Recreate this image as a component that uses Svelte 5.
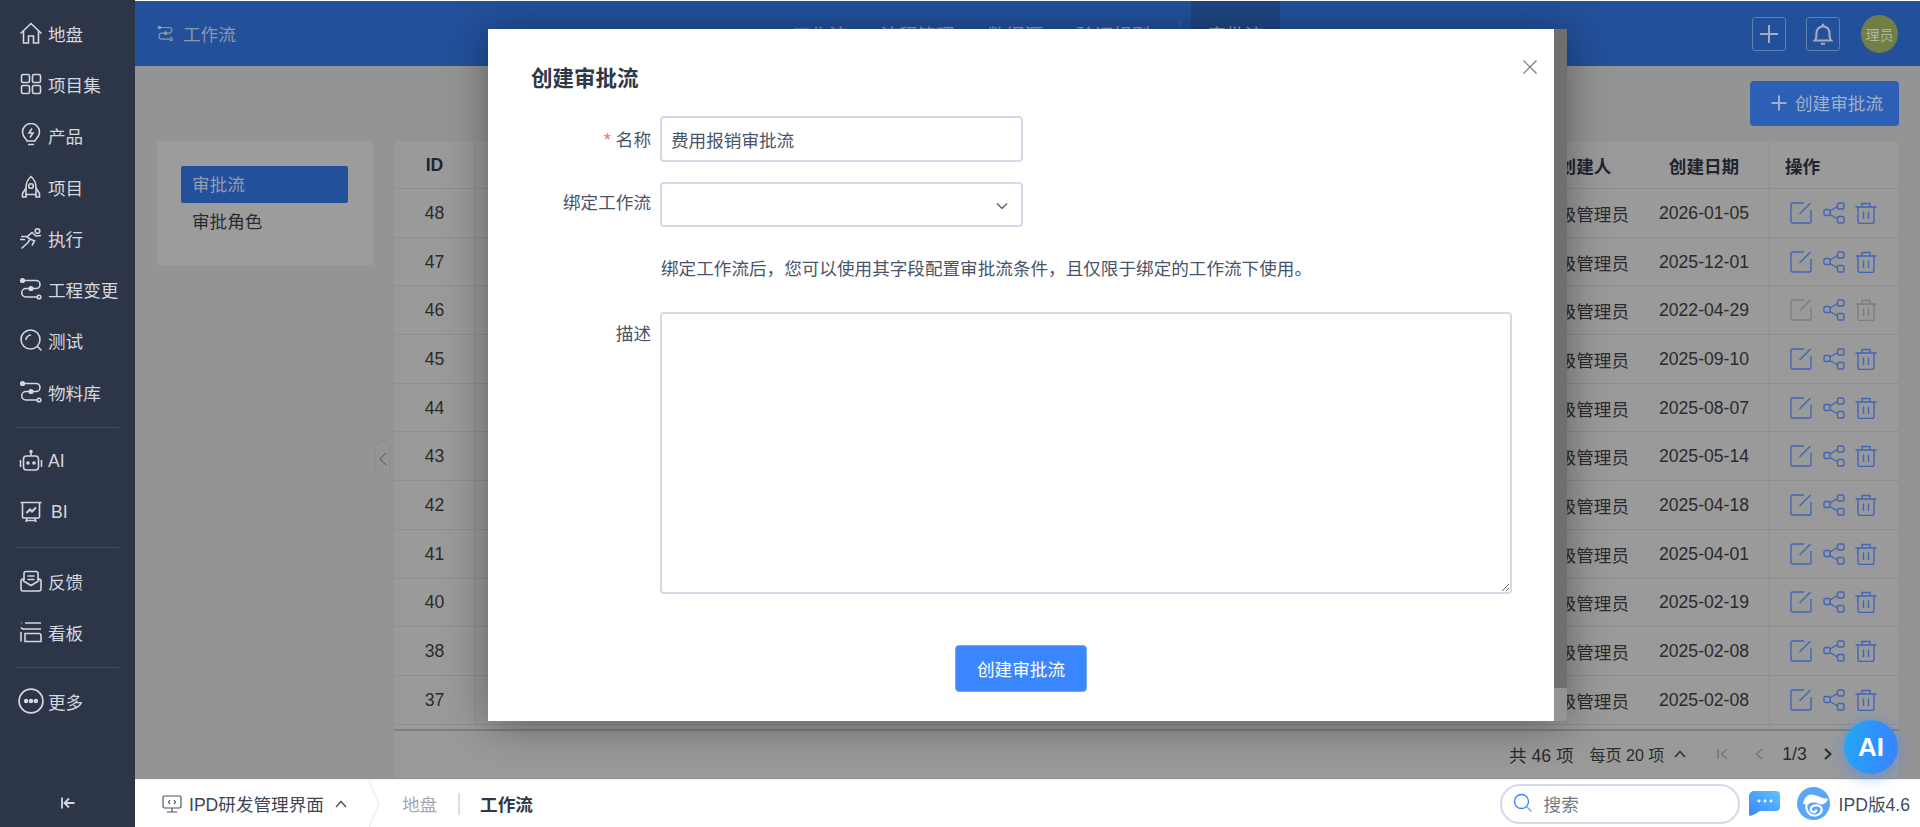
<script>
  const ic = {
    home: '<path d="M1.500 12.500 12 2.500l10.500 10"/><path d="M4.500 10v12h5v-7h5v7h5V10"/>',
    grid: '<rect x="2.500" y="2.500" width="8" height="8" rx="1.500"/><rect x="13.500" y="2.500" width="8" height="8" rx="1.500"/><rect x="2.500" y="13.500" width="8" height="8" rx="1.500"/><rect x="13.500" y="13.500" width="8" height="8" rx="1.500"/>',
    bulb: '<path d="M8 18c0-2-4.500-3.500-4.500-9a8.500 8.500 0 0 1 17 0c0 5.500-4.500 7-4.500 9z"/><path d="m13 5.500-3 4.500h4l-3 4.500M9 21.500h6"/>',
    rocket: '<path d="M12 1.500c3.500 3 5 7 5 11v7H7v-7c0-4 1.500-8 5-11z"/><circle cx="12" cy="11" r="2.300"/><path d="M7 13l-3.500 5.500v3.500H7v-2.500M17 13l3.500 5.500v3.500H17v-2.500"/>',
    run: '<circle cx="18.500" cy="5" r="2.300"/><path d="M2.500 22.500l6.500-6 2-3.500-3-2 5-4.500 4 3.500 5-.5M11 13l4.500 2-2.500 4.500M2 10.500h6M1 13.500h5"/>',
    flow: '<path d="M4.500 3.500H17a4 4 0 0 1 0 8H7a4.200 4.200 0 0 0 0 8.500h11"/><circle cx="3.500" cy="3.500" r="1.800" fill="currentColor"/><circle cx="12" cy="11.500" r="1.800" fill="currentColor"/><circle cx="20" cy="20" r="1.800"/>',
    test: '<circle cx="11.500" cy="11.500" r="9.500"/><path d="M7 12a5 5 0 0 1 5-5M18 18l4.500 4.500"/>',
    robot: '<rect x="4.500" y="7" width="15" height="14" rx="3"/><path d="M12 7V3M1.500 11v7M22.500 11v7"/><circle cx="12" cy="2.500" r="1" fill="currentColor"/><circle cx="9" cy="14" r="1" fill="currentColor"/><circle cx="15" cy="14" r="1" fill="currentColor"/>',
    board: '<path d="M1.500 2.500h21M3.500 2.500V17a1 1 0 0 0 1 1h15a1 1 0 0 0 1-1V2.500M8 18l-1 4M16 18l1 4M7 20.500h10"/><path d="m7.500 13 3.500-3.500 2 2 4-4" stroke-width="2"/>',
    mail: '<path d="M5 11V4.500a2 2 0 0 1 2-2h10a2 2 0 0 1 2 2V11"/><path d="M8.500 7h7M8.500 10.500h7"/><path d="M2 11.500a2 2 0 0 1 1.500-1.500h1v2l7.500 4.500 7.500-4.500v-2h1a2 2 0 0 1 1.500 1.500V20a2 2 0 0 1-2 2H4a2 2 0 0 1-2-2z"/>',
    kanban: '<path d="M6 3h16M2 3h.5M22 9H6a4 4 0 0 1-4-1.500M6 13.500h14a2 2 0 0 1 2 2v6H6z"/><path d="M2 12v9.500"/>',
    more: '<circle cx="12" cy="12" r="11"/><circle cx="7.500" cy="12" r="1.300" fill="currentColor"/><circle cx="12" cy="12" r="1.300" fill="currentColor"/><circle cx="16.500" cy="12" r="1.300" fill="currentColor"/>'
  };
  const groups = [
    [['home','地盘'],['grid','项目集'],['bulb','产品'],['rocket','项目'],['run','执行'],['flow','工程变更'],['test','测试'],['flow','物料库']],
    [['robot','AI'],['board','BI']],
    [['mail','反馈'],['kanban','看板']],
    [['more','更多']]
  ];
  const rows = [
    [48,'2026-01-05'],[47,'2025-12-01'],[46,'2022-04-29',true],[45,'2025-09-10'],[44,'2025-08-07'],
    [43,'2025-05-14'],[42,'2025-04-18'],[41,'2025-04-01'],[40,'2025-02-19'],[38,'2025-02-08'],[37,'2025-02-08']
  ];
  const tabs = ['工作流','流程管理','数据源','验证规则'];
</script>

<div class="app">
  <aside class="side">
    {#each groups as g, i}
      {#if i > 0}<div class="sep"></div>{/if}
      {#each g as it}
        <div class="nav" class:wide={it[1]==='BI'}>
          <svg viewBox="0 0 24 24" class="nic" class:big={it[0]==='more'}>{@html ic[it[0]]}</svg>
          <span>{it[1]}</span>
        </div>
      {/each}
    {/each}
    <div class="collapse">
      <svg viewBox="0 0 16 16" width="16" height="16"><path d="M2 2.500v11M14.500 8H5M9 3.500 4.500 8 9 12.500"/></svg>
    </div>
  </aside>

  <div class="right">
    <div class="main">
      <header class="head">
        <div class="title">
          <svg viewBox="0 0 24 24" class="tic">{@html ic.flow}</svg>
          <span>工作流</span>
        </div>
        <nav class="tabs">
          {#each tabs as t}<span>{t}</span>{/each}
          <i></i>
          <b>审批流</b>
        </nav>
        <div class="tools">
          <div class="tool"><svg viewBox="0 0 24 24" width="24" height="24"><path d="M12 3v18M3 12h18"/></svg></div>
          <div class="tool"><svg viewBox="0 0 24 24" width="26" height="26"><path d="M4.500 18c1.500-1.500 1.500-3.500 1.500-7a6 6 0 0 1 12 0c0 3.500 0 5.500 1.500 7zM12 2.500V5M10 21h4"/></svg></div>
          <div class="avatar">理员</div>
        </div>
      </header>

      <div class="content">
        <div class="bar">
          <button class="add">
            <svg viewBox="0 0 18 18" width="18" height="18"><path d="M9 1.500v15M1.500 9h15"/></svg>
            <span>创建审批流</span>
          </button>
        </div>
        <div class="cols">
          <div class="panel">
            <div class="pi on">审批流</div>
            <div class="pi">审批角色</div>
          </div>
          <div class="handle"><svg viewBox="0 0 10 16" width="10" height="16"><path d="M8 2 2 8l6 6"/></svg></div>
          <section class="table">
            <div class="row th">
              <div class="c id">ID</div><div class="c fill"></div><div class="c who">创建人</div><div class="c date">创建日期</div><div class="c ops">操作</div>
            </div>
            {#each rows as r}
              <div class="row">
                <div class="c id">{r[0]}</div>
                <div class="c fill"></div>
                <div class="c who">超级管理员</div>
                <div class="c date">{r[1]}</div>
                <div class="c ops acts">
                  <svg viewBox="0 0 22 22" class="act" class:off={r[2]}><path d="M14 1H2.500A1.500 1.500 0 0 0 1 2.500v17A1.500 1.500 0 0 0 2.500 21h17a1.500 1.500 0 0 0 1.500-1.500V8M20.500 1 9.500 12"/></svg>
                  <svg viewBox="0 0 22 22" class="act"><rect x="1" y="7.500" width="6" height="6" rx="1.500"/><rect x="14.500" y="1" width="6.500" height="6" rx="1.500"/><rect x="14.500" y="14.500" width="6.500" height="6.500" rx="1.500"/><path d="m7 9 7.500-4.500M7 12.500l7.500 4.500"/></svg>
                  <svg viewBox="0 0 22 22" class="act" class:off={r[2]}><path d="M.5 5h21M7 5V1.500h8V5M3 5v14.500A2 2 0 0 0 5 21.500h12a2 2 0 0 0 2-2V5M8.500 9.500V17M13.500 9.500V17"/></svg>
                </div>
              </div>
            {/each}
            <div class="pager">
              <span>共 46 项</span>
              <span class="per">每页 20 项</span>
              <svg viewBox="0 0 12 8" class="pg up"><path d="M1 7l5-5.500L11 7"/></svg>
              <svg viewBox="0 0 11 12" class="pg first dim"><path d="M1 1v10M10 1 4.500 6l5.500 5"/></svg>
              <svg viewBox="0 0 8 12" class="pg prev dim"><path d="M7 1 1.500 6 7 11"/></svg>
              <span class="page">1/3</span>
              <svg viewBox="0 0 8 12" class="pg next"><path d="M1 1l5.500 5L1 11"/></svg>
            </div>
          </section>
        </div>
      </div>

      <div class="dialog">
        <div class="modal">
          <svg class="close" viewBox="0 0 14 14" width="14" height="14"><path d="M.5.5l13 13M13.500.5l-13 13"/></svg>
          <h2>创建审批流</h2>
          <div class="f f1">
            <label for="n"><em>*</em> 名称</label>
            <input id="n" value="费用报销审批流" />
          </div>
          <div class="f f2">
            <label for="s">绑定工作流</label>
            <div class="sel" id="s"><svg viewBox="0 0 12 8" width="12" height="8"><path d="M1 1.500 6 6.500l5-5"/></svg></div>
          </div>
          <p class="hint">绑定工作流后，您可以使用其字段配置审批流条件，且仅限于绑定的工作流下使用。</p>
          <div class="f f3">
            <label for="d">描述</label>
            <textarea id="d"></textarea>
          </div>
          <div class="foot"><button class="ok">创建审批流</button></div>
        </div>
        <div class="track"><div class="thumb"></div></div>
      </div>
    </div>

    <footer class="bottom">
      <svg viewBox="0 0 20 20" width="20" height="20" class="mon"><rect x="1" y="2" width="18" height="12" rx="1.500"/><path d="M10 14v4M5 18h10M8 6 6.500 8 8 10M12 6l1.500 2L12 10"/></svg>
      <span class="sys">IPD研发管理界面</span>
      <svg viewBox="0 0 12 8" width="12" height="8" class="caret"><path d="M1 7l5-5.500L11 7"/></svg>
      <svg viewBox="0 0 12 48" width="12" height="48" class="arrow"><path d="M1 0l10 24L1 48"/></svg>
      <span class="crumb">地盘</span>
      <i class="vr"></i>
      <b class="cur">工作流</b>
      <div class="search">
        <svg viewBox="0 0 20 20" width="20" height="20"><circle cx="8.500" cy="8.500" r="7"/><path d="m13.500 13.500 5 5" stroke="#8fa6c8"/></svg>
        <span>搜索</span>
      </div>
      <svg class="chat" viewBox="0 0 31 25" width="31" height="25">
        <defs><linearGradient id="cg" x1="0" y1="1" x2="1" y2="0"><stop offset="0" stop-color="#3a86ff"/><stop offset="1" stop-color="#5cc4ff"/></linearGradient></defs>
        <path d="M5 0h22a4 4 0 0 1 4 4v12a4 4 0 0 1-4 4H11C8 22 4 24 1.500 25 .5 25 0 24 0 23V5a5 5 0 0 1 5-5z" fill="url(#cg)"/>
        <circle cx="10" cy="10" r="1.400" fill="#fff"/><circle cx="16" cy="10" r="1.400" fill="#fff"/><circle cx="22" cy="10" r="1.400" fill="#fff"/>
      </svg>
      <svg class="logo" viewBox="0 0 33 33" width="33" height="33">
        <circle cx="16.500" cy="16.500" r="16.500" fill="#5aa5f6"/>
        <path d="M6 17C7 11 10 8 14 7.500 19 7 24 12 31 11.500 30 16 26 18.500 22 17 18 15 13 15 11.500 17.500z" fill="#fff"/>
        <path d="M9.500 17C8.500 22 11 28 17 28.500 22 29 25.500 25 24.500 21.500 23.500 18.500 19 17.500 16 19 13 20.500 13 24 16 25 18 25.500 19.500 24 19 22.500" stroke="#fff" stroke-width="2.200" fill="none"/>
      </svg>
      <span class="ver">IPD版4.6</span>
    </footer>

    <div class="ai">AI</div>
  </div>
</div>

<style>
  :global(body) { margin: 0; background: #fff; overflow: hidden; }
  * { box-sizing: border-box; }
  svg { fill: none; stroke: currentColor; flex: none; }
  .app {
    display: flex; height: 827px; width: 1920px; padding-top: 1px;
    font-family: "Liberation Sans", "Noto Sans CJK SC", sans-serif; font-size: 17.6px;
  }
  .side {
    width: 135px; flex: none; margin-top: -1px; background: #2d3649; color: #d4d7dd;
    display: flex; flex-direction: column; padding-top: 7px;
  }
  .nav { height: 51.3px; display: flex; align-items: center; padding-left: 19px; gap: 5px; flex: none; }
  .nav span { padding-top: 1px; }
  .nav.wide { gap: 8px; }
  .nic { width: 24px; height: 24px; stroke-width: 1.6; }
  .nic.big { width: 26px; height: 26px; margin-left: -1px; margin-right: -1px; }
  .sep { height: 1px; background: #475063; margin: 9.500px 16px 7.200px; flex: none; }
  .collapse { margin-top: auto; height: 48px; display: flex; align-items: center; justify-content: center; }
  .collapse svg { stroke-width: 1.8; }

  .right { flex: 1; min-width: 0; display: flex; flex-direction: column; position: relative; }
  .main { height: 778px; background: #949494; position: relative; flex: none; display: flex; flex-direction: column; }

  .head { height: 65px; background: #22509a; display: flex; align-items: center; color: #9299a8; flex: none; }
  .title { display: flex; align-items: center; gap: 9px; width: 657px; padding-left: 22px; color: #8f98aa; }
  .tic { width: 17px; height: 17px; stroke-width: 1.6; }
  .tabs { display: flex; align-items: center; height: 100%; gap: 33px; color: #98a0ae; font-size: 18.5px; }
  .tabs i { width: 2px; height: 28px; background: #2f5ca3; margin-left: -4px; margin-right: -23px; }
  .tabs b { font-weight: 400; height: 100%; width: 89px; display: flex; align-items: center; justify-content: center; background: #1f4683; }
  .tools { margin-left: auto; display: flex; align-items: center; gap: 20px; padding-right: 22px; }
  .tool { width: 34px; height: 34px; border: 1px solid #5d7fb3; border-radius: 3px; display: flex; align-items: center; justify-content: center; color: #a3abb8; }
  .tool svg { stroke-width: 2; }
  .avatar { width: 37px; height: 38px; border-radius: 50%; background: #6f7f45; color: #b0b5a5; font-size: 14px; display: flex; align-items: center; justify-content: center; margin-left: 1px; }

  .content { flex: 1; min-height: 0; display: flex; flex-direction: column; padding: 15px 21px 0 22px; }
  .bar { display: flex; justify-content: flex-end; height: 60px; flex: none; }
  .add { width: 149px; height: 45px; background: #2b60b6; border: 0; border-radius: 4px; color: #9fb0cc; font: inherit; display: flex; align-items: center; gap: 7px; padding: 0 0 2px 20px; white-space: nowrap; }
  .add svg { stroke-width: 2; }
  .cols { flex: 1; min-height: 0; display: flex; gap: 21px; position: relative; padding-bottom: 1px; }
  .panel { width: 216px; height: 124px; flex: none; background: #9c9c9c; padding: 25px 25px 0 24px; color: #2c2c2c; }
  .pi { height: 37px; padding: 0 0 3px 11px; display: flex; align-items: center; border-radius: 2px; }
  .pi.on { background: #22509a; color: #929db4; }
  .pi + .pi { height: 36px; padding-bottom: 2px; }
  .handle { position: absolute; left: 218px; top: 299px; width: 15px; height: 38px; border: 1px solid #8d8d8d; border-radius: 8px; display: flex; align-items: center; justify-content: center; color: #555; }
  .handle svg { stroke-width: 1; }

  .table { flex: 1; min-width: 0; background: #9a9a9a; border-radius: 3px; display: flex; flex-direction: column; color: #2b2b2b; box-shadow: 0 0 1px #8c8c8c; }
  .row { display: grid; grid-template-columns: 82px 1fr 112px 130px 130px; height: 48.7px; flex: none; border-bottom: 1px solid #8e8e8e; }
  .th { height: 48px; font-weight: 700; color: #1f2530; }
  .c { display: flex; align-items: center; justify-content: center; min-width: 0; white-space: nowrap; padding-top: 1px; }
  .id { border-right: 1px solid #8e8e8e; }
  .who { padding-left: 4px; }
  .ops { border-left: 1px solid #8e8e8e; justify-content: flex-start; padding-left: 15px; }
  .acts { padding-left: 20px; gap: 10.600px; padding-top: 0; }
  .act { width: 22px; height: 22px; color: #3f66b8; stroke-width: 1.4; }
  .act.off { color: #7e7e7e; }
  .pager { margin-top: 4px; border-top: 2px solid #7f7f7f; flex: 1; display: flex; align-items: center; padding-left: 1115px; color: #2b2b2b; }
  .per { font-size: 16px; margin-left: 16px; }
  .pg { flex: none; stroke-width: 1.5; }
  .up { width: 12px; height: 8px; margin-left: 10px; }
  .first { width: 11px; height: 12px; margin-left: 31px; }
  .prev { width: 8px; height: 12px; margin-left: 27px; }
  .page { margin-left: 19px; }
  .next { width: 8px; height: 12px; margin-left: 17px; stroke-width: 2; }
  .dim { color: #777; }

  .dialog { position: absolute; left: 353px; top: 28px; width: 1079px; height: 692px; display: flex; box-shadow: 0 4px 44px rgba(0,0,0,.38); border-radius: 0 0 4px 0; }
  .modal { width: 1066px; background: #fff; position: relative; flex: none; color: #4a5468; }
  .track { width: 13px; background: #949494; border-radius: 0 0 4px 0; overflow: hidden; }
  .thumb { height: 659px; background: #6f6f6f; }
  .close { position: absolute; left: 1035px; top: 31px; color: #6f7685; stroke-width: 1.2; }
  h2 { margin: 0; position: absolute; left: 43px; top: 37px; font-size: 21.500px; line-height: 26px; font-weight: 700; color: #2f3848; }
  .f { position: absolute; left: 0; display: flex; }
  .f label { width: 163px; text-align: right; margin-right: 9px; flex: none; line-height: 26px; padding-top: 1px; }
  em { color: #f56c6c; font-style: normal; }
  .f1 { top: 87px; align-items: center; }
  input { width: 363px; height: 46px; border: 2px solid #d6d8e8; border-radius: 4px; padding: 0 9px; font: inherit; color: #4a5468; outline: 0; }
  .f2 { top: 153px; align-items: flex-start; }
  .f2 label { margin-top: 7px; }
  .sel { width: 363px; height: 45px; border: 2px solid #d6d8e8; border-radius: 4px; display: flex; align-items: center; justify-content: flex-end; padding: 3px 13px 0 0; color: #4a5468; }
  .sel svg { stroke-width: 1.2; }
  .hint { position: absolute; left: 173px; top: 227px; margin: 0; line-height: 26px; font-size: 17.6px; white-space: nowrap; }
  .f3 { top: 283px; }
  .f3 label { margin-top: 8px; }
  textarea { width: 852px; height: 282px; border: 2px solid #d6d8e8; border-radius: 4px; outline: 0; display: block; font: inherit; }
  .foot { position: absolute; left: 467px; top: 616px; }
  .ok { width: 132px; height: 47px; background: #3a86ff; border: 1px solid #75a8ff; border-radius: 4px; color: #fff; font: inherit; padding: 0; }

  .bottom { height: 48px; flex: none; background: #fff; display: flex; align-items: center; border-top: 1px solid #eef0f4; color: #3d4555; padding-left: 27px; }
  .mon { color: #4a5260; stroke-width: 1.2; }
  .sys { margin-left: 7px; }
  .caret { margin-left: 11px; stroke-width: 1.2; }
  .arrow { margin-left: 21px; color: #e5e7ec; stroke-width: 1; }
  .crumb { margin-left: 22px; color: #a4a7ad; padding-bottom: 1px; }
  .vr { width: 2px; height: 22px; background: #dcdfe4; margin-left: 21px; }
  .cur { margin-left: 20px; color: #2f3848; font-weight: 700; }
  .search { margin-left: auto; width: 240px; height: 40px; border: 2px solid #d6d9ea; border-radius: 20px; display: flex; align-items: center; padding: 0 0 1px 11px; gap: 11px; color: #727a8a; }
  .search svg { color: #3a86ff; stroke-width: 1.4; }
  .chat { margin-left: 9px; stroke: none; }
  .logo { margin-left: 17px; stroke: none; }
  .ver { margin-left: 9px; margin-right: 10px; color: #454c5c; white-space: nowrap; }

  .ai { position: absolute; left: 1709px; top: 719px; width: 54px; height: 54px; border-radius: 50%; background: linear-gradient(100deg, #22a8f6, #3b80ff); box-shadow: 0 3px 16px rgba(58,134,255,.55); color: #fff; font-size: 26px; font-weight: 700; display: flex; align-items: center; justify-content: center; z-index: 5; }
</style>
